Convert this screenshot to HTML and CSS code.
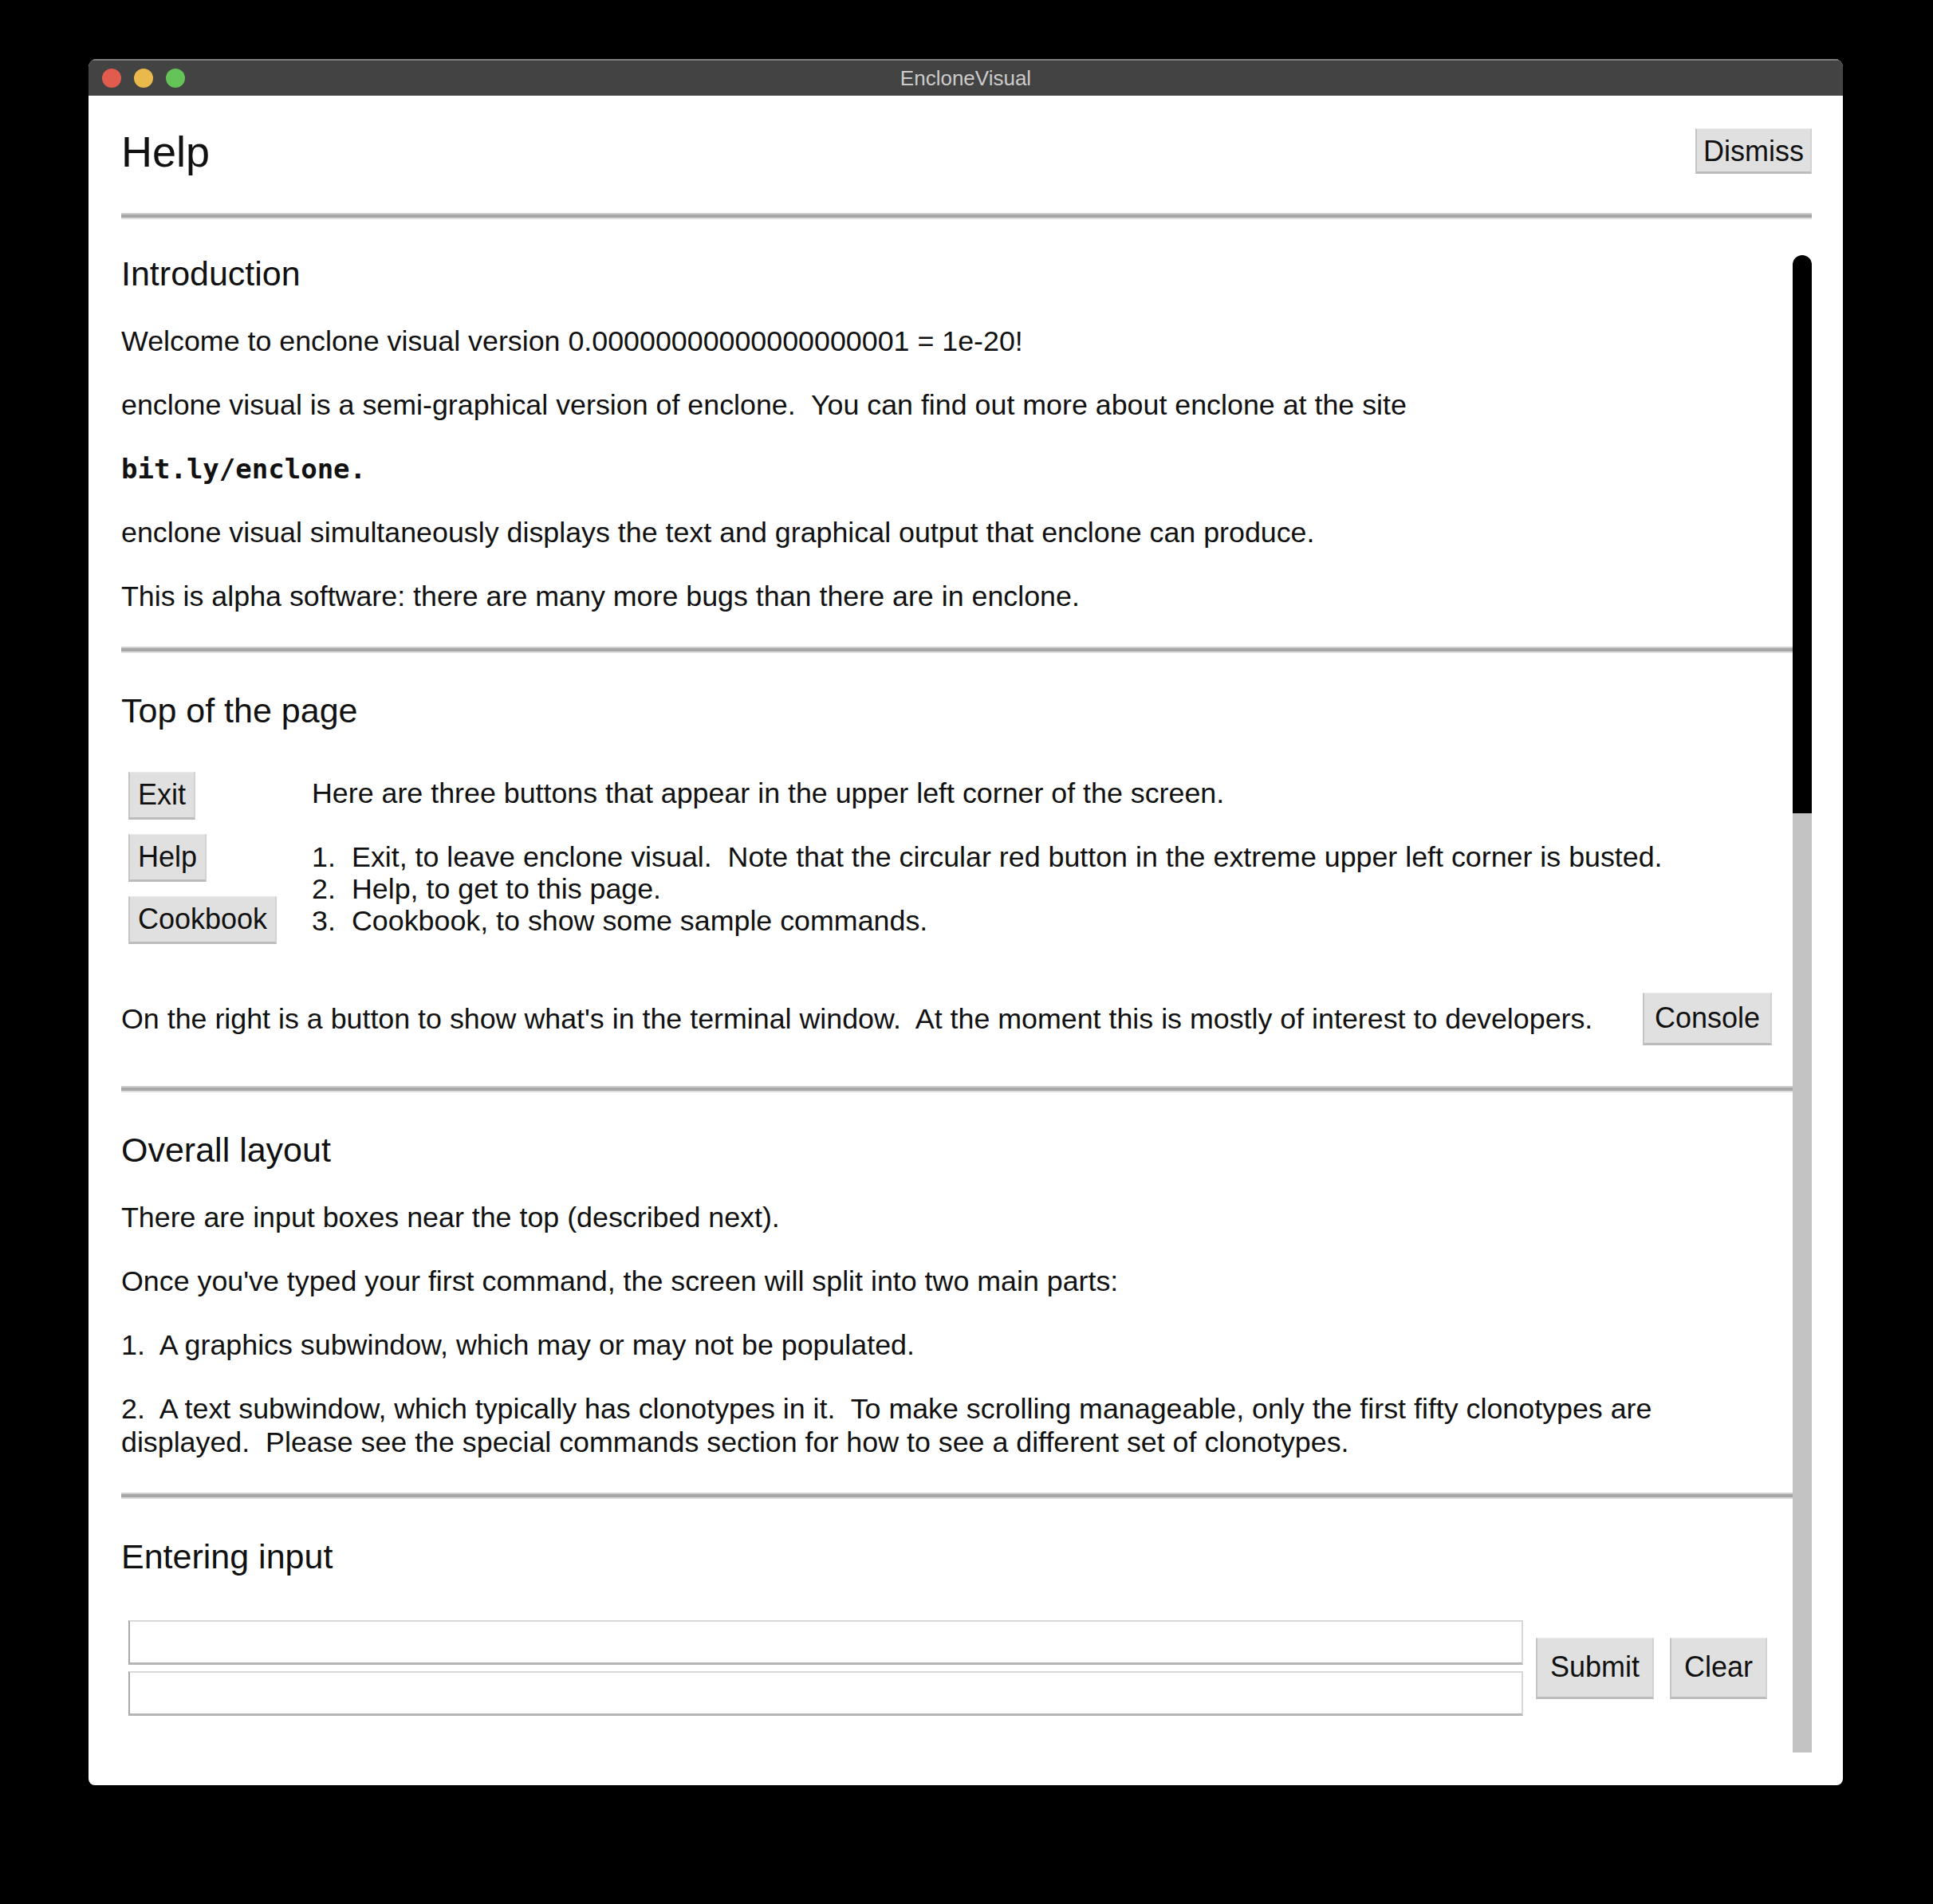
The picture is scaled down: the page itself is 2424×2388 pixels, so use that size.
FILE: index.html
```html
<!DOCTYPE html>
<html>
<head>
<meta charset="utf-8">
<title>EncloneVisual</title>
<link rel="stylesheet" href="styles.css">
</head>
<body>
<div class="window">
  <div class="titlebar">
    <div class="lights">
      <span class="light red"></span>
      <span class="light yellow"></span>
      <span class="light green"></span>
    </div>
    <div class="title">EncloneVisual</div>
    <div></div>
  </div>
  <div class="main">
    <div class="header">
      <h1 class="page-title">Help</h1>
      <button class="btn btn-dismiss">Dismiss</button>
    </div>
    <hr class="rule rule-top">
    <div class="scroll">
      <div class="scroll-content">
        <section class="section">
          <h2 class="sec-title">Introduction</h2>
          <p class="para">Welcome to enclone visual version 0.00000000000000000001 = 1e-20!</p>
          <p class="para">enclone visual is a semi-graphical version of enclone.  You can find out more about enclone at the site</p>
          <p class="para mono">bit.ly/enclone.</p>
          <p class="para">enclone visual simultaneously displays the text and graphical output that enclone can produce.</p>
          <p class="para">This is alpha software: there are many more bugs than there are in enclone.</p>
        </section>
        <hr class="rule rule-sec">
        <section class="section">
          <h2 class="sec-title">Top of the page</h2>
          <div class="tp-row">
            <div class="tp-buttons">
              <button class="btn">Exit</button>
              <button class="btn">Help</button>
              <button class="btn">Cookbook</button>
            </div>
            <div class="tp-text">
              <div class="tp-intro">Here are three buttons that appear in the upper left corner of the screen.</div>
              <ol class="tp-list">
                <li class="tp-item"><span class="num">1.</span><span class="pw">Exit, to leave enclone visual.  Note that the circular red button in the extreme upper left corner is busted.</span></li>
                <li class="tp-item"><span class="num">2.</span><span class="pw">Help, to get to this page.</span></li>
                <li class="tp-item"><span class="num">3.</span><span class="pw">Cookbook, to show some sample commands.</span></li>
              </ol>
            </div>
          </div>
          <div class="console-row">
            <span class="pw">On the right is a button to show what's in the terminal window.  At the moment this is mostly of interest to developers.</span>
            <button class="btn btn-console">Console</button>
          </div>
        </section>
        <hr class="rule rule-sec">
        <section class="section">
          <h2 class="sec-title">Overall layout</h2>
          <p class="para">There are input boxes near the top (described next).</p>
          <p class="para">Once you've typed your first command, the screen will split into two main parts:</p>
          <p class="para">1.  A graphics subwindow, which may or may not be populated.</p>
          <p class="para">2.  A text subwindow, which typically has clonotypes in it.  To make scrolling manageable, only the first fifty clonotypes are<br>displayed.  Please see the special commands section for how to see a different set of clonotypes.</p>
        </section>
        <hr class="rule rule-sec">
        <section class="section">
          <h2 class="sec-title">Entering input</h2>
          <div class="input-row">
            <div class="inputs">
              <input class="text-input" type="text">
              <input class="text-input" type="text">
            </div>
            <button class="btn btn-big btn-submit">Submit</button>
            <button class="btn btn-big btn-clear">Clear</button>
          </div>
        </section>
      </div>
      <div class="scrollbar">
        <div class="thumb"></div>
        <div class="track"></div>
      </div>
    </div>
  </div>
</div>
</body>
</html>
```
FILE: styles.css
```css
* { box-sizing: border-box; }
html, body { margin: 0; padding: 0; background: #000; }
body {
  font-family: "Liberation Sans", Arial, Helvetica, sans-serif;
  color: #111;
  width: 2424px;
  height: 2388px;
}
.window {
  margin: 74px 0 0 111px;
  width: 2200px;
  height: 2165px;
  background: #fff;
  border-radius: 10px 10px 8px 8px;
  overflow: hidden;
  display: flex;
  flex-direction: column;
}
.titlebar {
  height: 46px;
  flex: none;
  background: #434343;
  border-top: 2px solid #7d7d7d;
  display: grid;
  grid-template-columns: 1fr auto 1fr;
  align-items: center;
}
.lights {
  display: flex;
  gap: 16px;
  padding-left: 17px;
}
.light {
  width: 24px;
  height: 24px;
  border-radius: 50%;
  display: block;
}
.red { background: #e25c4e; }
.yellow { background: #e9b94b; }
.green { background: #64c457; }
.title {
  font-size: 26px;
  color: #cbcbcb;
  line-height: 30px;
}
.main {
  flex: 1;
  padding: 0 39px 0 41px;
  display: flex;
  flex-direction: column;
}
.header {
  margin-top: 41px;
  height: 57px;
  display: flex;
  align-items: center;
  justify-content: space-between;
}
.page-title {
  font-size: 54px;
  line-height: 62px;
  font-weight: normal;
  margin: 0;
}
.btn {
  font-family: "Liberation Sans", Arial, Helvetica, sans-serif;
  font-size: 36px;
  line-height: 42px;
  color: #111;
  background: #e0e0e0;
  border: 0;
  border-top: 1px solid #ebebeb;
  border-left: 2px solid #c4c4c4;
  border-right: 2px solid #d2d2d2;
  border-bottom: 3px solid #bcbcbc;
  padding: 7px 10px;
  margin: 0;
  border-radius: 0;
  flex: none;
}
.btn-dismiss { padding: 7px 8px 4px; }
.btn-console { padding: 10px 13px 10px; }
.btn-big { padding: 15px 16px 16px; }
.rule {
  border: 0;
  margin: 0;
  height: 8px;
  background: #a6a6a6;
  border-top: 2px solid #cfcfcf;
  border-bottom: 2px solid #dedede;
}
.rule-top { margin-top: 49px; flex: none; }
.rule-sec { margin: 42px 0 49px; }
.scroll {
  margin-top: 45px;
  height: 1878px;
  display: flex;
}
.scroll-content {
  flex: 1;
  overflow: hidden;
}
.scrollbar {
  width: 24px;
  flex: none;
  display: flex;
  flex-direction: column;
}
.thumb {
  height: 700px;
  background: #000;
  border-radius: 12px 12px 0 0;
}
.track {
  flex: 1;
  background: #c3c3c3;
}
.section { margin: 0; }
.sec-title {
  font-size: 43px;
  line-height: 46px;
  font-weight: normal;
  margin: 0 0 41px;
}
.para {
  font-size: 35.8px;
  line-height: 42px;
  margin: 0 0 38px;
  white-space: pre-wrap;
}
.pw { white-space: pre-wrap; }
.mono {
  font-family: "DejaVu Sans Mono", "Liberation Mono", monospace;
  font-weight: bold;
  font-size: 34px;
}
.tp-row {
  display: flex;
  padding-top: 13px;
}
.tp-buttons {
  width: 239px;
  padding-left: 9px;
  display: flex;
  flex-direction: column;
  align-items: flex-start;
  gap: 18px;
  flex: none;
}
.tp-text {
  padding-top: 6px;
  font-size: 35.8px;
  line-height: 42px;
}
.tp-intro { white-space: pre-wrap; }
.tp-list {
  list-style: none;
  margin: 39px 0 0;
  padding: 0;
}
.tp-item {
  display: flex;
  line-height: 40px;
}
.num { width: 50px; flex: none; }
.console-row {
  margin-top: 61px;
  margin-bottom: 51px;
  padding-right: 26px;
  display: flex;
  align-items: center;
  justify-content: space-between;
  font-size: 35.8px;
  line-height: 42px;
}
.input-row {
  padding-top: 16px;
  padding-left: 9px;
  display: flex;
  align-items: center;
}
.inputs {
  width: 1749px;
  display: flex;
  flex-direction: column;
  gap: 8px;
}
.text-input {
  display: block;
  width: 100%;
  height: 56px;
  margin: 0;
  padding: 0 8px;
  background: #fff;
  border: 2px solid #d8d8d8;
  border-left: 2px solid #a9a9a9;
  border-bottom: 3px solid #b5b5b5;
  border-radius: 0;
  font-family: "Liberation Sans", Arial, sans-serif;
  font-size: 32px;
  outline: none;
}
.btn-submit { margin-left: 16px; }
.btn-clear { margin-left: 20px; }
```
